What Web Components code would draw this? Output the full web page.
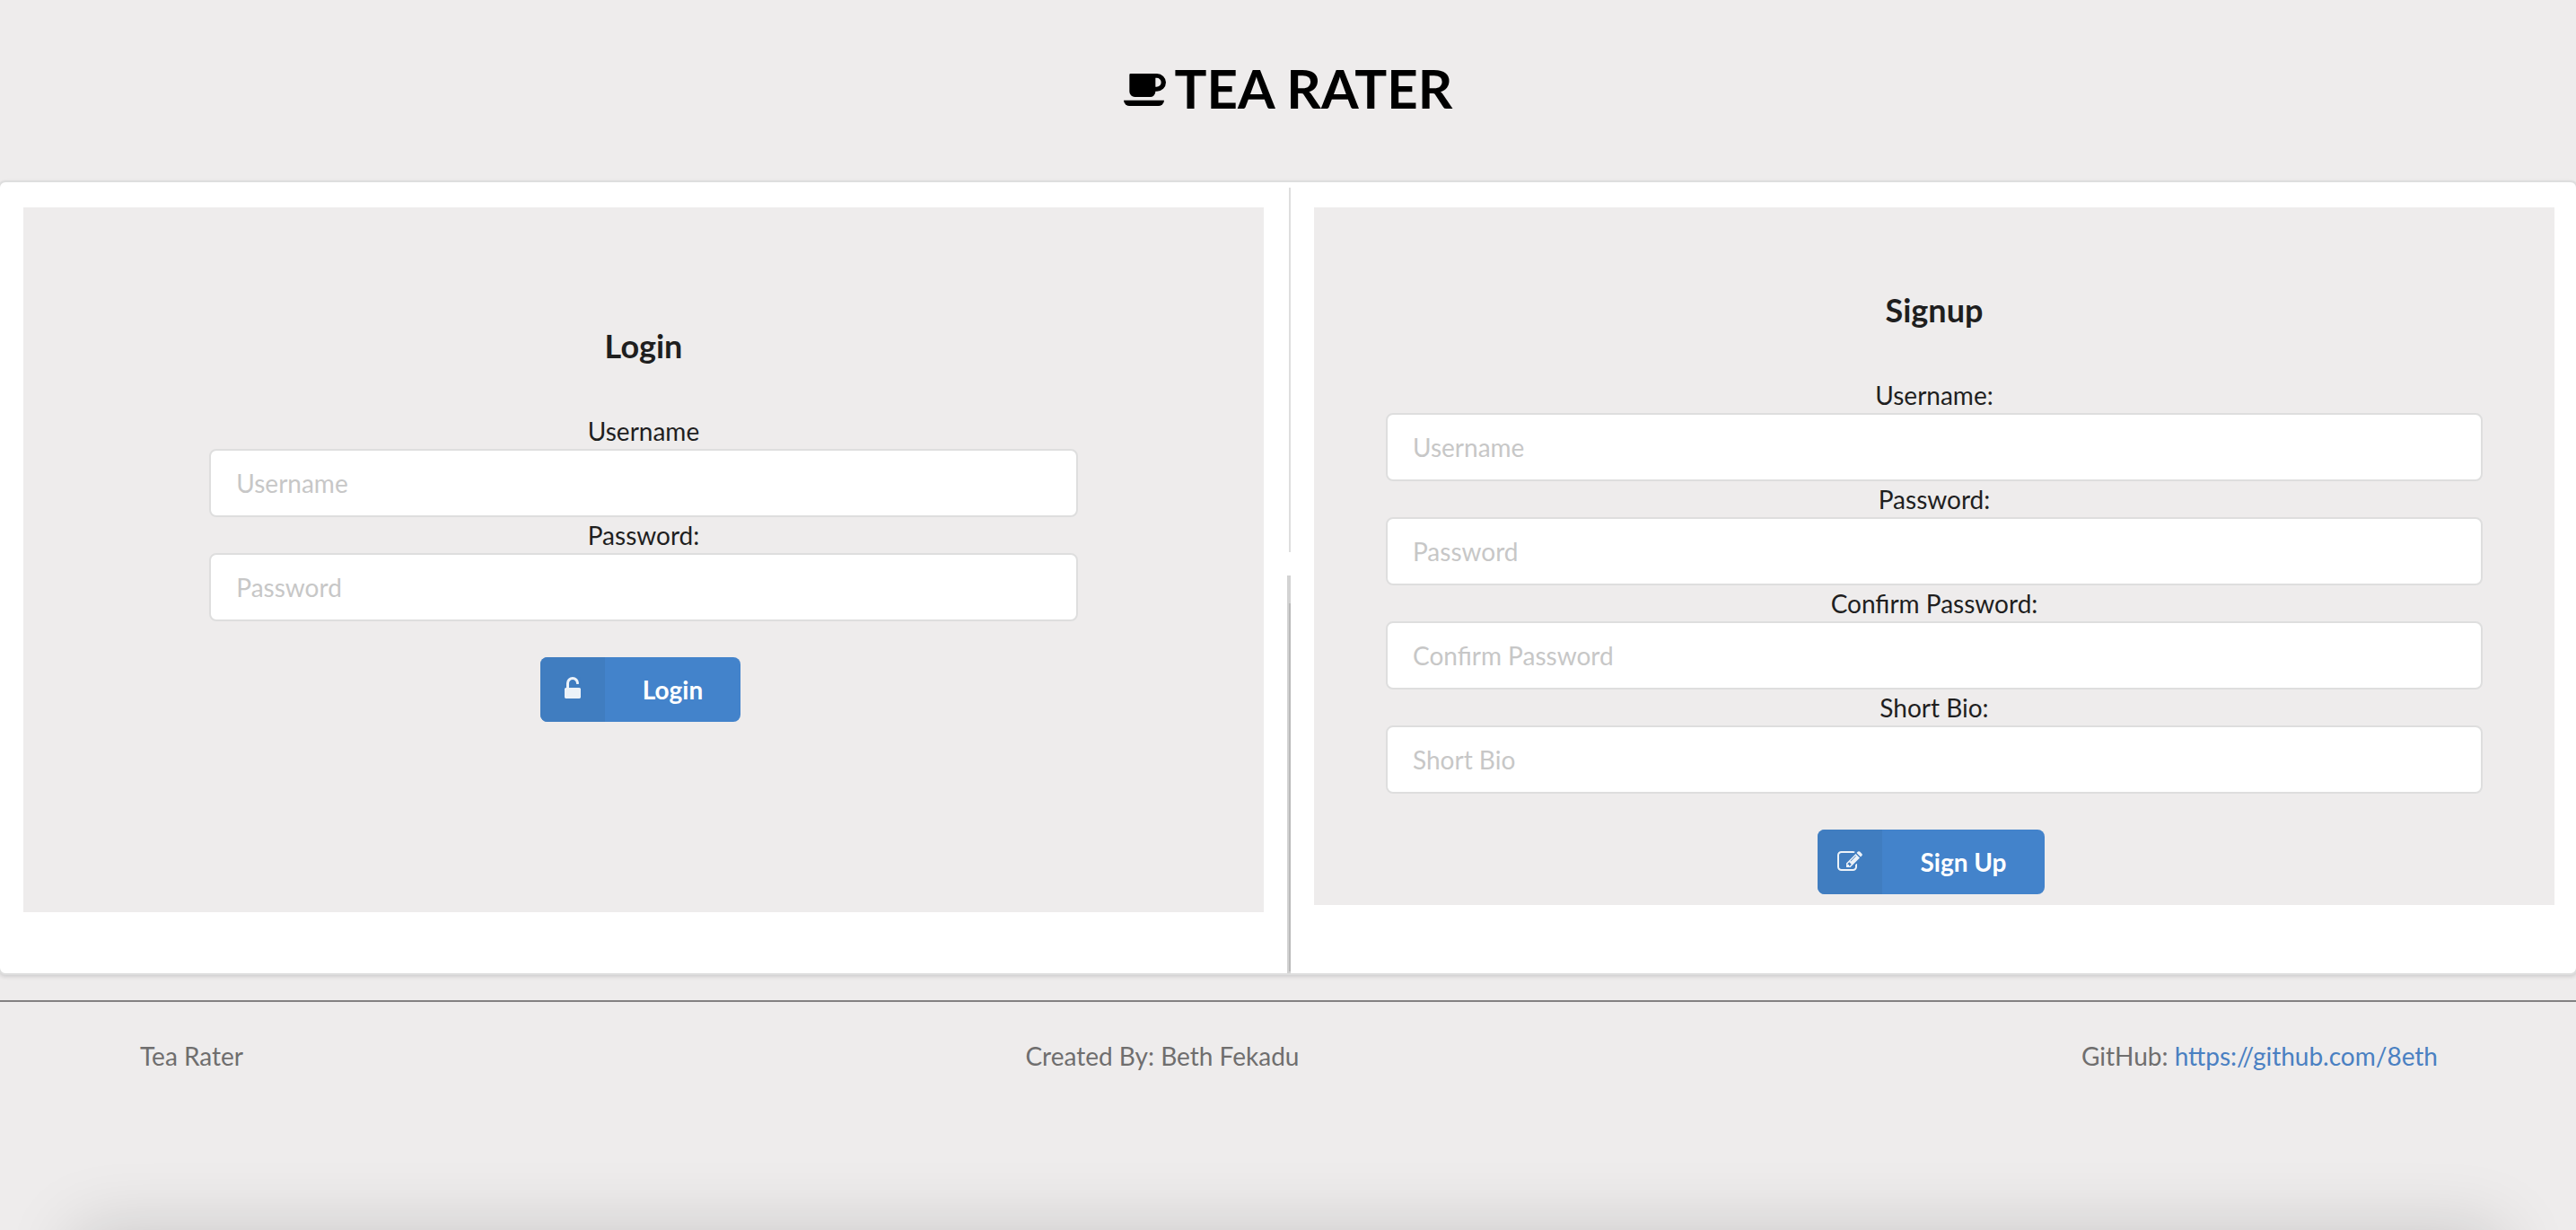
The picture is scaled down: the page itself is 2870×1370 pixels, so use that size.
<!DOCTYPE html>
<html lang="en">
<head>
<meta charset="utf-8">
<title>Tea Rater</title>
<style>
  html, body { margin: 0; height: 100%; }
  body {
    background: #eeecec;
    color: #1f1f1f;
    font: 28px/40px Lato, "Liberation Sans", sans-serif;
    overflow-x: hidden;
  }
</style>
</head>
<body>
<tea-app></tea-app>
<script>
  const define = (name, html, setup) => {
    const template = document.createElement('template');
    template.innerHTML = html;
    customElements.define(name, class extends HTMLElement {
      constructor() {
        super();
        this.attachShadow({ mode: 'open' }).append(template.content.cloneNode(true));
      }
      connectedCallback() { if (setup) setup(this, this.shadowRoot); }
    });
  };

  define('tea-header', `
    <style>
      :host { display: block; padding: 62px 0 67px; }
      h1 { display: flex; justify-content: center; align-items: center; gap: 10px; margin: 0; font-size: 60px; line-height: 72px; font-weight: 700; color: #000; }
      svg { display: block; width: 47px; height: 36px; margin-top: 4px; }
    </style>
    <h1>
      <svg viewBox="0 0 141 108" aria-hidden="true"><path fill-rule="evenodd" d="M23 0H111a30 29.500 0 0 1 0 59H106a18 18 0 0 1-18 19H37a18 18 0 0 1-18-18V4a4 4 0 0 1 4-4zM106 14v30h4a15 15 0 0 0 0-30z"/><path d="M0 89h135q0 8-6 13.500t-14 5.500H20q-8 0-14-5.500T0 89z"/></svg>
      <span><slot></slot></span>
    </h1>`);

  define('tea-divider', `
    <style>
      :host { display: flex; flex-direction: column; align-items: center; padding-top: 6px; }
      i { display: block; width: 4px; box-sizing: border-box; }
      .upper { flex: 407 0 0; border-right: 2px solid #dedede; }
      .lower { flex: 411 0 0; display: flex; flex-direction: column; align-items: flex-end; margin-top: 26px; padding: 31px 0 2px; background: #d3d3d3; }
      .lower b { flex: 1; width: 2px; background: #bababa; }
    </style>
    <i class="upper"></i><i class="lower"><b></b></i>`);

  define('tea-panel', `
    <style>
      :host { display: block; min-width: 0; background: #eeecec; text-align: center; }
      h3 { margin: 0 0 52px; font-size: 36px; line-height: 46px; font-weight: 700; }
    </style>
    <h3></h3><slot></slot>`,
    (el, root) => { root.querySelector('h3').textContent = el.getAttribute('heading'); });

  define('tea-field', `
    <style>
      :host { display: block; }
      label { display: block; }
      input { display: block; width: 100%; height: 76px; box-sizing: border-box; margin: 0; padding: 0 28px; border: 2px solid #dedede; border-radius: 8px; background: #fff; font: inherit; color: inherit; outline: none; }
      input::placeholder { color: #c7c7c7; opacity: 1; }
    </style>
    <label for="box"></label><input id="box">`,
    (el, root) => {
      root.querySelector('label').textContent = el.getAttribute('label');
      const input = root.querySelector('input');
      input.type = el.getAttribute('type') || 'text';
      input.placeholder = el.getAttribute('placeholder');
    });

  define('tea-button', `
    <style>
      :host { display: flex; justify-content: center; margin-top: 40px; }
      button { display: flex; align-items: center; height: 72px; margin: 0 7px 0 0; padding: 0 42px 0 0; border: 0; border-radius: 8px; overflow: hidden; background: #4383cb; color: #fff; font: inherit; font-weight: 700; cursor: pointer; }
      .icon { display: flex; align-items: center; justify-content: center; width: 72px; height: 72px; margin-right: 42px; background: #407dc0; }
      ::slotted(svg) { display: block; width: 28px; height: 28px; fill: #fff; opacity: .9; }
    </style>
    <button type="button"><span class="icon"><slot name="icon"></slot></span><slot></slot></button>`);

  define('tea-footer', `
    <style>
      :host { display: flex; justify-content: space-between; margin-top: 28px; padding: 40px 154px 40px 156px; border-top: 2px solid #838182; color: #6f6e6e; }
      a { color: #4a80c2; text-decoration: none; }
    </style>
    <span>Tea Rater</span>
    <span>Created By: Beth Fekadu</span>
    <span>GitHub: <a href="https://github.com/8eth">https://github.com/8eth</a></span>`);

  define('tea-app', `
    <style>
      :host { display: flex; flex-direction: column; min-height: 100vh; position: relative; overflow: hidden; }
      main { display: grid; grid-template-columns: 1fr 56px 1fr; margin: 0 -2px; padding: 0 24px 0 26px; border: 2px solid #dedede; border-radius: 8px; background: #fff; box-shadow: 0 2px 4px rgba(34, 36, 38, .15); }
      tea-panel { margin: 28px 0 68px; }
      .login { padding: 131px 15% 212px; }
      .signup { align-self: start; padding: 91px 80px 12px; }
      .shade { position: absolute; left: 84px; right: 84px; top: 100%; height: 200px; box-shadow: 0 0 80px rgba(0, 0, 0, .16); }
    </style>
    <tea-header>TEA RATER</tea-header>
    <main>
      <tea-panel class="login" heading="Login">
        <tea-field label="Username" placeholder="Username"></tea-field>
        <tea-field label="Password:" placeholder="Password" type="password"></tea-field>
        <tea-button><svg slot="icon" viewBox="-320 0 1792 1792" aria-hidden="true"><path d="M1056 768q40 0 68 28t28 68v576q0 40-28 68t-68 28h-960q-40 0-68-28t-28-68v-576q0-40 28-68t68-28h32v-320q0-185 131.500-316.500t316.500-131.500 316.500 131.500 131.500 316.500q0 26-19 45t-45 19h-64q-26 0-45-19t-19-45q0-106-75-181t-181-75-181 75-75 181v320h736z"/></svg>Login</tea-button>
      </tea-panel>
      <tea-divider></tea-divider>
      <tea-panel class="signup" heading="Signup">
        <tea-field label="Username:" placeholder="Username"></tea-field>
        <tea-field label="Password:" placeholder="Password" type="password"></tea-field>
        <tea-field label="Confirm Password:" placeholder="Confirm Password" type="password"></tea-field>
        <tea-field label="Short Bio:" placeholder="Short Bio"></tea-field>
        <tea-button><svg slot="icon" viewBox="0 0 1792 1792" aria-hidden="true"><path d="M888 1184l116-116-152-152-116 116v56h96v96h56zm440-720q-16-16-33 1l-350 350q-17 17-1 33t33-1l350-350q17-17 1-33zm80 594v190q0 119-84.500 203.500t-203.500 84.500h-832q-119 0-203.500-84.500t-84.500-203.500v-832q0-119 84.500-203.500t203.500-84.500h832q63 0 117 25 15 7 18 23 3 17-9 29l-49 49q-14 14-32 8-23-6-45-6h-832q-66 0-113 47t-47 113v832q0 66 47 113t113 47h832q66 0 113-47t47-113v-126q0-13 9-22l64-64q15-15 35-7t20 29zm-96-738l288 288-672 672h-288v-288zm444 132l-92 92-288-288 92-92q28-28 68-28t68 28l152 152q28 28 28 68t-28 68z"/></svg>Sign Up</tea-button>
      </tea-panel>
    </main>
    <tea-footer></tea-footer>
    <div class="shade"></div>`);
</script>
</body>
</html>
